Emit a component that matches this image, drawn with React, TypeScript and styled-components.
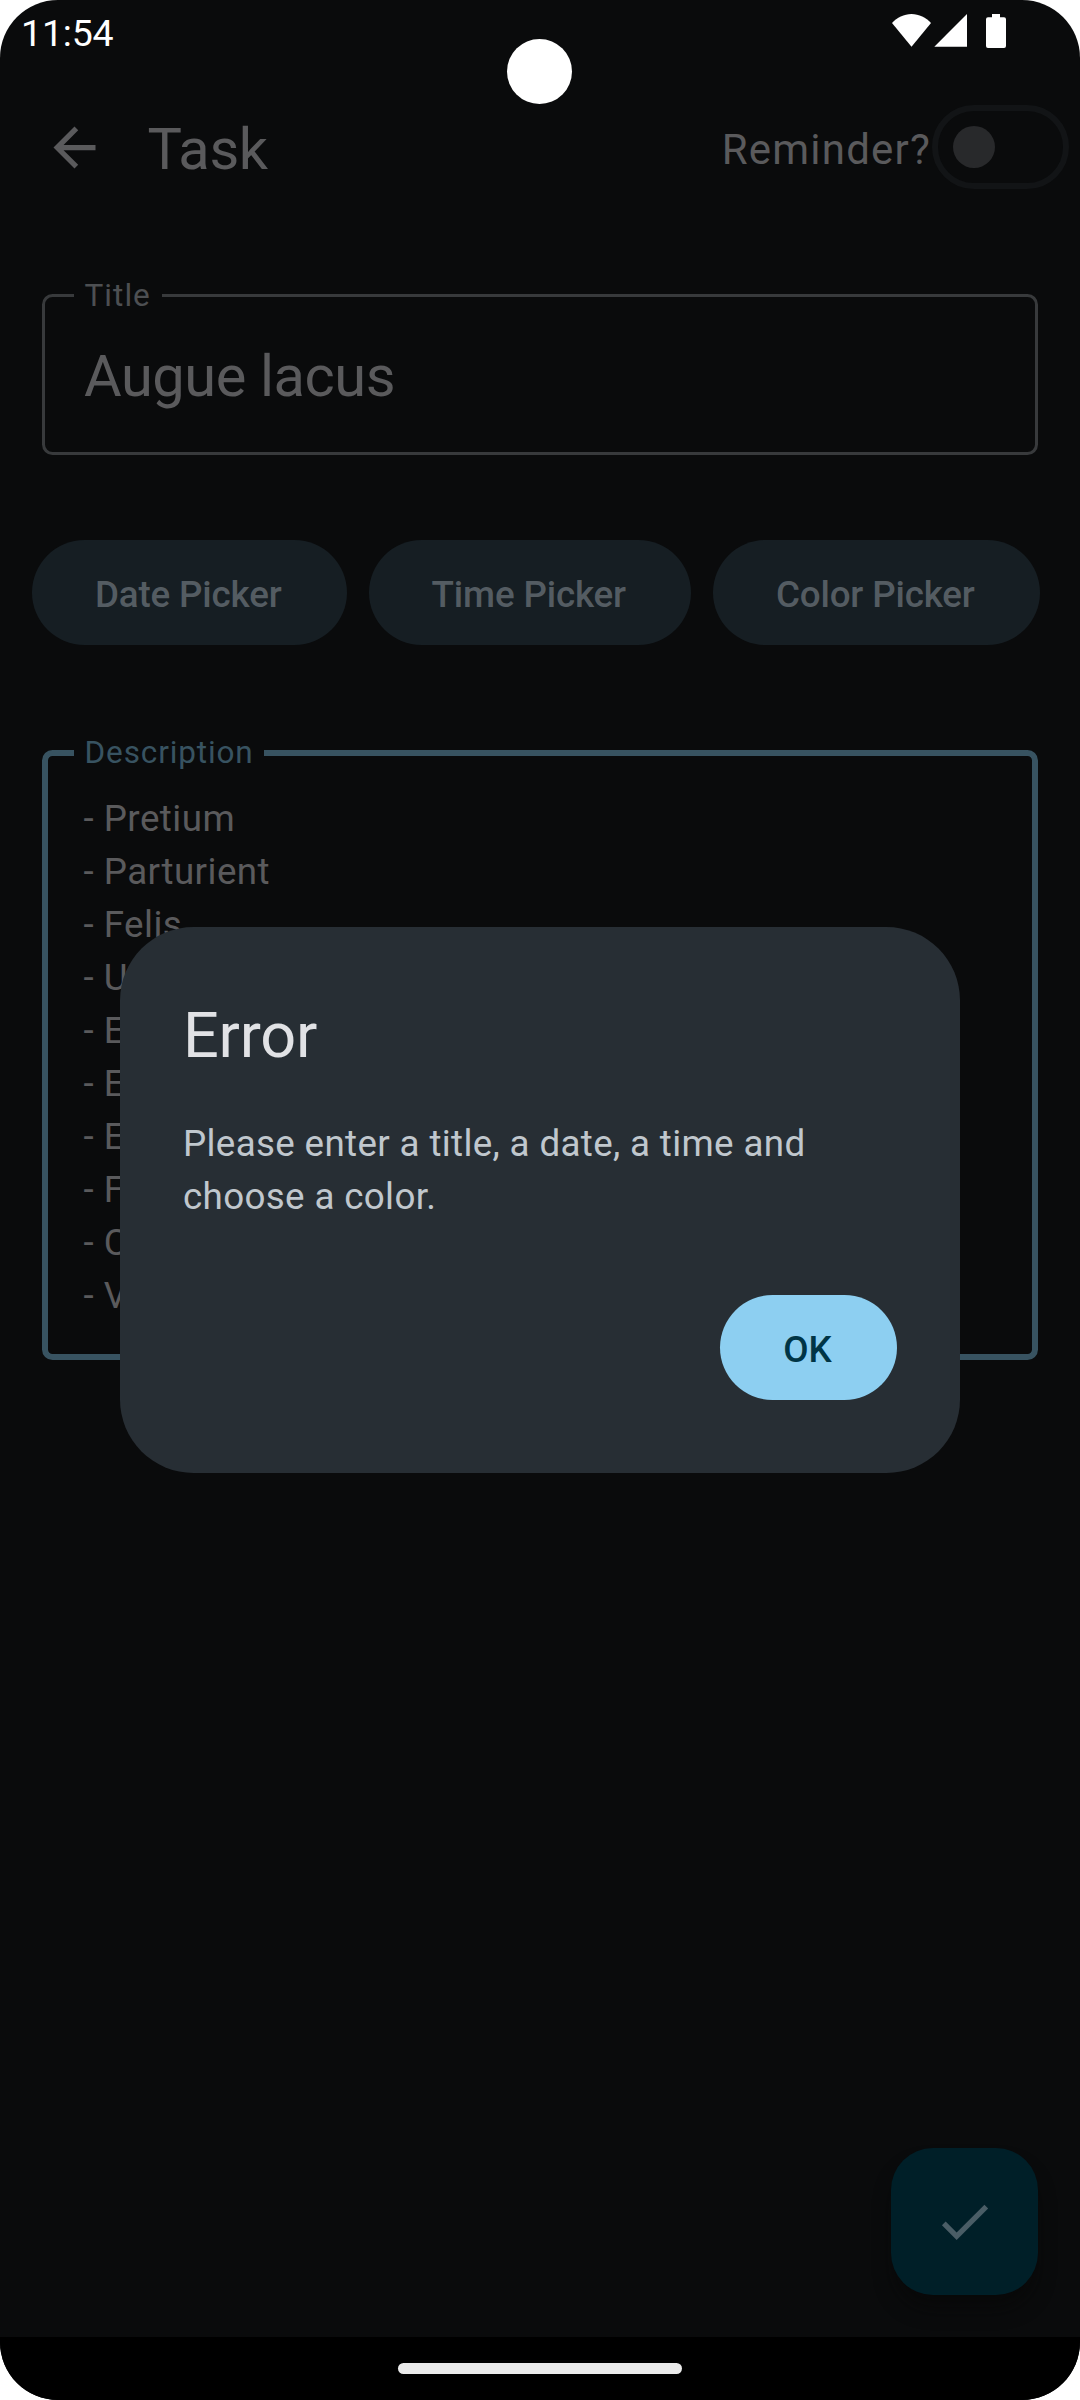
import React from "react";
import styled, { createGlobalStyle } from "styled-components";

const GlobalStyle = createGlobalStyle`
  *, *::before, *::after { box-sizing: border-box; }
  body { margin: 0; background: #fff; font-family: Roboto, "Noto Sans", sans-serif; }
`;

const color = {
  background: "#0a0b0c",
  onBackground: "#5a5a5c",
  outline: "#383a3c",
  label: "#4d4f52",
  primary: "#385361",
  tonal: "#161e23",
  onTonal: "#545c62",
  fab: "#001f28",
  onFab: "#4a5d66",
  dialog: "#272e34",
  dialogTitle: "#e1e2e5",
  dialogText: "#c0c7cd",
  action: "#8dcff1",
  onAction: "#003546",
};

const Screen = styled.div`
  position: relative;
  display: flex;
  flex-direction: column;
  width: 1080px;
  height: 2400px;
  overflow: hidden;
  border-radius: 58px;
  background: ${color.background};
  color: ${color.onBackground};
`;

const StatusBar = styled.header`
  display: flex;
  justify-content: space-between;
  height: 63px;
  padding: 0 73px 0 21px;
  color: #fff;
`;

const Clock = styled.time`
  font-size: 37.5px;
  line-height: 66px;
  letter-spacing: -0.2px;
`;

const StatusIcons = styled.svg`
  display: block;
  width: 116px;
  height: 36px;
  margin-top: 13px;
  fill: #fff;
`;

const Camera = styled.div`
  position: absolute;
  top: 39px;
  left: 507px;
  width: 65px;
  height: 65px;
  border-radius: 50%;
  background: #fff;
`;

const AppBar = styled.div`
  display: flex;
  align-items: center;
  height: 168px;
  padding: 0 11px 0 42.5px;
`;

const Icon = styled.svg`
  display: block;
  width: 63px;
  height: 63px;
  fill: currentColor;
`;

const BackButton = styled.button`
  border: 0;
  padding: 0;
  background: none;
  color: inherit;
`;

const ScreenTitle = styled.h1`
  flex: 1;
  margin: 0;
  padding: 4px 0 0 42px;
  font-size: 57.75px;
  font-weight: 400;
  line-height: 74px;
  letter-spacing: -0.4px;
`;

const ReminderLabel = styled.span`
  padding-top: 4px;
  margin-right: 1px;
  font-size: 42px;
  line-height: 63px;
  letter-spacing: 1.2px;
`;

const Switch = styled.span`
  display: flex;
  align-items: center;
  width: 137px;
  height: 84px;
  padding-left: 15px;
  border: 6px solid #121416;
  border-radius: 42px;
`;

const Thumb = styled.span`
  width: 42px;
  height: 42px;
  border-radius: 50%;
  background: #28292b;
`;

const Form = styled.main`
  display: flex;
  flex: 1;
  flex-direction: column;
  padding-top: 43px;
`;

const Field = styled.fieldset<{ $focused?: boolean }>`
  min-width: 0;
  margin: 0 42px;
  padding: 0;
  border: ${(p) => (p.$focused ? 6 : 3)}px solid ${(p) => (p.$focused ? color.primary : color.outline)};
  border-radius: 10.5px;
`;

const FieldLabel = styled.legend<{ $focused?: boolean }>`
  min-width: 88px;
  height: 42px;
  margin-left: ${(p) => (p.$focused ? 26 : 29)}px;
  padding: ${(p) => (p.$focused ? 0 : 1)}px 10.5px 0;
  color: ${(p) => (p.$focused ? color.primary : color.label)};
  font-size: 31.5px;
  line-height: 42px;
  letter-spacing: ${(p) => (p.$focused ? 0.88 : 1.05)}px;
`;

const TitleValue = styled.div`
  height: 136px;
  padding: 23px 39px 0;
  font-size: 57.75px;
  line-height: 74px;
  letter-spacing: -0.42px;
`;

const DescriptionValue = styled.div`
  height: 580px;
  padding: 18px 35.5px 0;
  font-size: 36.75px;
  line-height: 53px;
  letter-spacing: 0.46px;
`;

const PickerRow = styled.div`
  display: flex;
  gap: 21.5px;
  margin: 85px 0 87px;
  padding: 0 32px;
`;

const PillButton = styled.button<{ $primary?: boolean }>`
  height: 105px;
  padding: 3px 65.5px 0 63px;
  border: 0;
  border-radius: 53px;
  background: ${(p) => (p.$primary ? color.action : color.tonal)};
  color: ${(p) => (p.$primary ? color.onAction : color.onTonal)};
  font: 500 36.75px/53px Roboto, "Noto Sans", sans-serif;
  letter-spacing: -0.16px;
  white-space: nowrap;
`;

const FabRow = styled.div`
  display: flex;
  justify-content: flex-end;
  padding: 0 42px 42px;
`;

const Fab = styled.button`
  display: grid;
  place-items: center;
  width: 147px;
  height: 147px;
  padding: 0;
  border: 0;
  border-radius: 42px;
  background: ${color.fab};
  color: ${color.onFab};
  box-shadow: 0 16px 20px -4px rgba(7, 7, 7, 0.6);
`;

const NavBar = styled.footer`
  display: flex;
  justify-content: center;
  height: 63px;
  padding-top: 26px;
  background: #000;
`;

const GestureHandle = styled.span`
  width: 284px;
  height: 11px;
  border-radius: 6px;
  background: #ebebeb;
`;

const Overlay = styled.div`
  position: absolute;
  inset: 0;
  display: grid;
  place-items: center;
`;

const Dialog = styled.section`
  display: flex;
  flex-direction: column;
  width: 840px;
  height: 546px;
  padding: 67px 63px 73px;
  border-radius: 73.5px;
  background: ${color.dialog};
`;

const DialogTitle = styled.h2`
  margin: 0;
  color: ${color.dialogTitle};
  font-size: 63px;
  font-weight: 400;
  line-height: 84px;
  letter-spacing: -0.2px;
`;

const DialogText = styled.p`
  flex: 1;
  margin: 39px 0 0;
  color: ${color.dialogText};
  font-size: 36.75px;
  line-height: 53px;
  letter-spacing: 0.35px;
`;

const DialogActions = styled.div`
  display: flex;
  justify-content: flex-end;
`;

const description = [
  "Pretium",
  "Parturient",
  "Felis",
  "Ut",
  "Eu",
  "Et",
  "Est",
  "Fusce",
  "Cras",
  "Vel",
];

export default function App() {
  return (
    <>
      <GlobalStyle />
      <Screen>
        <StatusBar>
          <Clock>11:54</Clock>
          <StatusIcons viewBox="891 13 116 36" aria-hidden="true">
            <path d="M911.5 46.7 892 23C897 17.500 904 14 911.500 14S926 17.500 931 23Z" />
            <path d="M967 14v32.700h-32.700Z" />
            <path d="M992 14h8v3.300h4q2 0 2 2v26.700q0 2-2 2h-16q-2 0-2-2V19.300q0-2 2-2h4Z" />
          </StatusIcons>
        </StatusBar>
        <AppBar>
          <BackButton aria-label="Back">
            <Icon viewBox="0 0 24 24">
              <path d="M20 11H7.830l5.590-5.590L12 4l-8 8 8 8 1.410-1.410L7.830 13H20v-2z" />
            </Icon>
          </BackButton>
          <ScreenTitle>Task</ScreenTitle>
          <ReminderLabel>Reminder?</ReminderLabel>
          <Switch>
            <Thumb />
          </Switch>
        </AppBar>
        <Form>
          <Field>
            <FieldLabel>Title</FieldLabel>
            <TitleValue>Augue lacus</TitleValue>
          </Field>
          <PickerRow>
            <PillButton>Date Picker</PillButton>
            <PillButton>Time Picker</PillButton>
            <PillButton>Color Picker</PillButton>
          </PickerRow>
          <Field $focused>
            <FieldLabel $focused>Description</FieldLabel>
            <DescriptionValue>
              {description.map((line) => (
                <div key={line}>- {line}</div>
              ))}
            </DescriptionValue>
          </Field>
        </Form>
        <FabRow>
          <Fab aria-label="Save">
            <Icon viewBox="0 0 24 24">
              <path d="M9 16.170 4.830 12l-1.420 1.410L9 19 21 7l-1.410-1.410z" />
            </Icon>
          </Fab>
        </FabRow>
        <NavBar>
          <GestureHandle />
        </NavBar>
        <Camera />
        <Overlay>
          <Dialog role="alertdialog">
            <DialogTitle>Error</DialogTitle>
            <DialogText>Please enter a title, a date, a time and choose a color.</DialogText>
            <DialogActions>
              <PillButton $primary>OK</PillButton>
            </DialogActions>
          </Dialog>
        </Overlay>
      </Screen>
    </>
  );
}
